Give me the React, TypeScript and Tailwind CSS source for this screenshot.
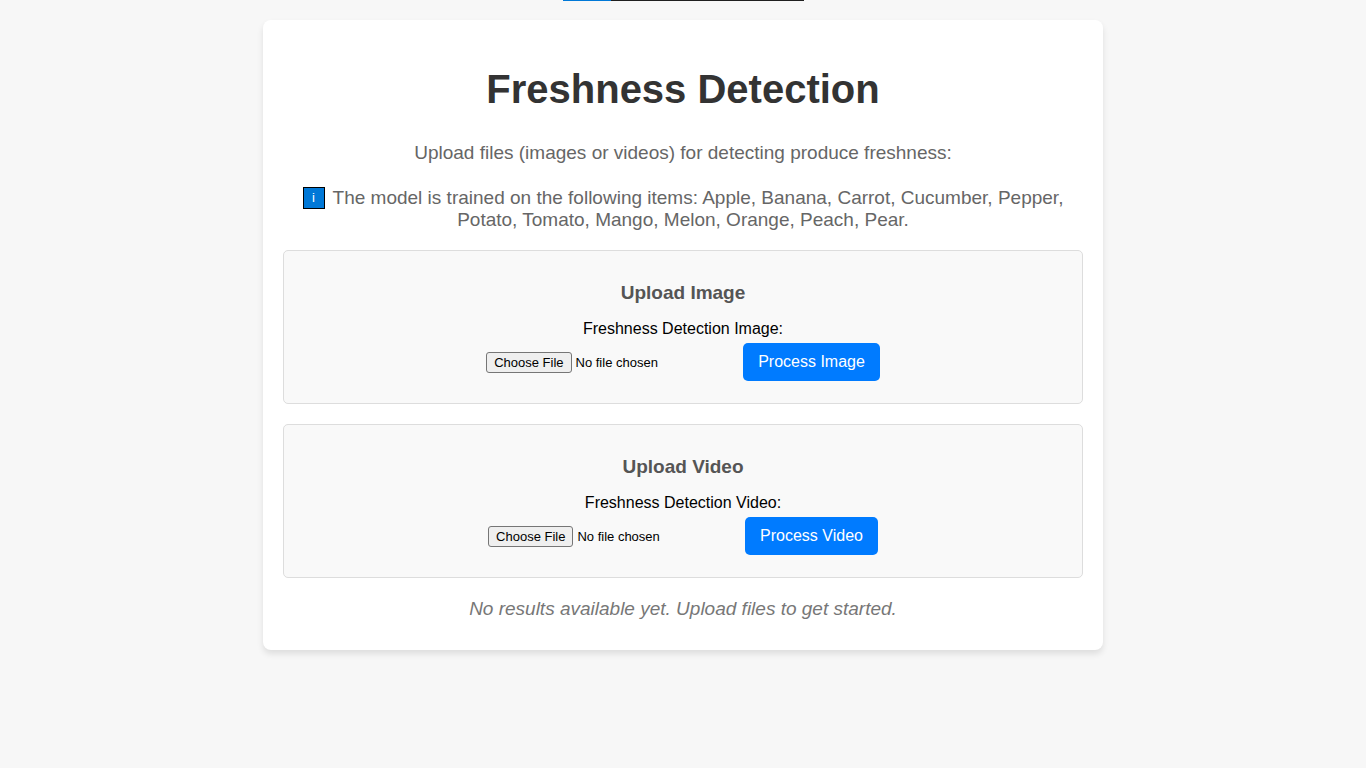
import React from "react";

type UploadCardProps = { kind: "Image" | "Video"; accept: string };

function UploadCard({ kind, accept }: UploadCardProps) {
  const id = `upload-${kind.toLowerCase()}`;
  return (
    <section className="mb-5 rounded-[5px] border border-[#dddddd] bg-[#f9f9f9] px-5 pt-[31px] pb-[22px]">
      <h3 className="mb-4 text-[19px] leading-[22px] font-bold text-[#555555]">Upload {kind}</h3>
      <form onSubmit={(e) => e.preventDefault()}>
        <label htmlFor={id} className="block text-[16px] leading-[18px] text-black">
          Freshness Detection {kind}:
        </label>
        <div className="mt-[5px] flex items-center justify-center gap-1">
          <input
            id={id}
            type="file"
            accept={accept}
            className="w-[253px] text-[13px] text-black file:mr-1 file:h-[21px] file:rounded-[3px] file:border file:border-solid file:border-[#767676] file:bg-[#efefef] file:px-[7px] file:text-[13px] file:leading-[15px] file:text-black"
          />
          <button
            type="submit"
            className="h-[38px] cursor-pointer rounded-[5px] bg-[#007bff] px-[15px] text-[16px] leading-[18px] text-white hover:bg-[#0056b3]"
          >
            Process {kind}
          </button>
        </div>
      </form>
    </section>
  );
}

export default function App() {
  return (
    <div className="min-h-screen bg-[#f7f7f7] text-center font-['Liberation_Sans',Arial,sans-serif]">
      <div className="mx-auto flex h-px w-[241px]">
        <div className="w-12 bg-[#0078d7]" />
        <div className="flex-1 bg-[#1f1f1f]" />
      </div>
      <main className="mx-auto mt-[19px] max-w-[840px] rounded-lg bg-white px-5 pt-[46px] pb-[30px] shadow-[0_4px_6px_rgba(0,0,0,0.1)]">
        <h1 className="text-[40px] leading-[46px] font-bold text-[#333333]">Freshness Detection</h1>
        <p className="mt-[30px] text-[19px] leading-[22px] text-[#666666]">
          Upload files (images or videos) for detecting produce freshness:
        </p>
        <p className="mt-[23px] mb-[19px] text-[19px] leading-[22px] text-[#666666]">
          <span className="mr-2 inline-flex size-[22px] items-center justify-center border border-black bg-[#0078d7] align-top text-[13px] text-white">i</span>
          The model is trained on the following items: Apple, Banana, Carrot, Cucumber, Pepper, Potato, Tomato, Mango, Melon, Orange, Peach, Pear.
        </p>
        <UploadCard kind="Image" accept="image/*" />
        <UploadCard kind="Video" accept="video/*" />
        <p className="text-[19px] leading-[22px] text-[#777777] italic">
          No results available yet. Upload files to get started.
        </p>
      </main>
    </div>
  );
}
